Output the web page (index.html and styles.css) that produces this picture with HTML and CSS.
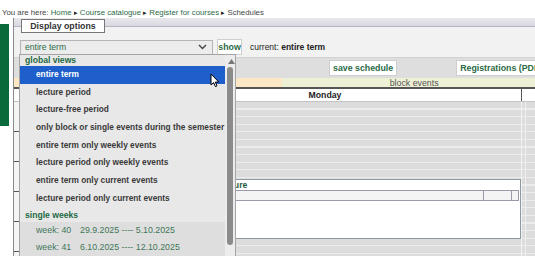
FILE: index.html
```html
<!DOCTYPE html>
<html lang="en">
<head>
  <meta charset="UTF-8">
  <title>Schedules</title>
  <link rel="stylesheet" href="styles.css">
</head>
<body>

  <div class="crumbs">
    You are here: <a href="#">Home</a> <span class="arr">&#9656;</span>
    <a href="#">Course catalogue</a> <span class="arr">&#9656;</span>
    <a href="#">Register for courses</a> <span class="arr">&#9656;</span>
    Schedules
  </div>

  <div class="page">
    <div class="brand"></div>

    <div class="panel">
      <div class="panel-top"></div>

      <div class="options">
        <div class="legend">Display options</div>
        <div class="opt-row">
          <div class="select">
            <span>entire term</span>
            <svg width="9" height="6" viewBox="0 0 9 6"><path d="M1 1 L4.5 4.5 L8 1" fill="none" stroke="#444" stroke-width="1.4"/></svg>
          </div>
          <button class="btn">show</button>
          <span class="current">current: <b>entire term</b></span>
        </div>
      </div>

      <div class="sched">
        <div class="toolbar">
          <button class="btn">save schedule</button>
          <button class="btn">Registrations (PDF)</button>
        </div>
        <div class="block-row">
          <div class="block-pad"></div>
          <div class="block-ev">block events</div>
        </div>
        <div class="days">
          <div class="time-col"></div>
          <div class="day">Monday</div>
          <div class="rest"></div>
        </div>
        <div class="grid">
          <div class="time-col hours"></div>
          <div class="day-col">
            <div class="event">
              <div class="ev-title">Lecture</div>
              <div class="ev-bar">
                <div class="ev-cell main"></div>
                <div class="ev-cell mid"></div>
                <div class="ev-cell end"></div>
              </div>
            </div>
          </div>
          <div class="rest"></div>
        </div>
      </div>
    </div>

    <!-- open select list -->
    <div class="dropdown">
      <div class="list">
        <div class="grp">global views</div>
        <div class="opt on">entire term</div>
        <div class="opt">lecture period</div>
        <div class="opt">lecture-free period</div>
        <div class="opt">only block or single events during the semester</div>
        <div class="opt">entire term only weekly events</div>
        <div class="opt">lecture period only weekly events</div>
        <div class="opt">entire term only current events</div>
        <div class="opt">lecture period only current events</div>
        <div class="grp wk-head">single weeks</div>
        <div class="opt week"><span class="wk">week: 40</span>29.9.2025 ---- 5.10.2025</div>
        <div class="opt week"><span class="wk">week: 41</span>6.10.2025 ---- 12.10.2025</div>
      </div>
      <div class="scroll">
        <svg class="up" width="7" height="5" viewBox="0 0 7 5"><path d="M0 5 L3.5 0 L7 5 Z" fill="#777"/></svg>
        <div class="thumb"></div>
      </div>
    </div>

    <svg class="cursor" width="10" height="15" viewBox="0 0 10 15">
      <path d="M1 1 L1 12 L3.6 9.6 L5.4 13.6 L7 12.9 L5.3 9 L8.8 9 Z" fill="#fff" stroke="#000" stroke-width="1"/>
    </svg>
  </div>

</body>
</html>
```

FILE: styles.css
```css
:root {
  --green: #2b6b46;
  --text: #333;
}
* { margin: 0; padding: 0; box-sizing: border-box; }
body {
  font-family: "Liberation Sans", Arial, sans-serif;
  color: var(--text);
  background: #fff;
  width: 535px; height: 256px; overflow: hidden;
}

.crumbs { height: 18px; padding: 7px 0 0 2px; font-size: 7.8px; line-height: 12px; white-space: nowrap; color: #444; }
.crumbs a { color: var(--green); text-decoration: none; }
.crumbs .arr { font-size: 7px; color: #222; }

.page { position: relative; display: flex; height: 238px; }
.brand { width: 9px; height: 102px; margin-top: 6px; background: #0b6a3a; flex: none; }
.panel { margin-left: 4px; border-left: 1px solid #8a8a8a; flex: 1; display: flex; flex-direction: column; }

.panel-top { height: 9px; background: linear-gradient(#e8e8ec, #d8d9e0); border-bottom: 1px solid #b4b7c3; }
.options { height: 31px; background: #f2f2f2; border-bottom: 1px solid #d2d2d2; padding-left: 6px; }
.legend {
  width: 84px; height: 14px; margin: -8px 0 0 1px; background: #fff; border: 1px solid #777;
  font-weight: bold; font-size: 8.8px; line-height: 12px; text-align: center; color: #333;
}
.opt-row { display: flex; align-items: center; margin-top: 6px; }
.select {
  width: 193px; height: 15px; background: #ececec; border: 1px solid #b4b4b4;
  display: flex; align-items: center; justify-content: space-between; padding: 0 5px 0 4px;
  font-size: 8.6px; color: var(--green);
}
.btn {
  background: #fff; border: 1px solid #cfcfcf; color: var(--green);
  font-family: inherit; font-weight: bold; font-size: 8.8px; padding: 0 3px; height: 16px;
}
.opt-row .btn { margin-left: 4px; width: 25px; padding: 0; }
.current { margin-left: 8px; font-size: 8.5px; color: #222; }

.sched { flex: 1; display: flex; flex-direction: column; }
.toolbar { height: 20px; background: #dedede; display: flex; align-items: center; padding-left: 315px; gap: 59px; white-space: nowrap; }
.toolbar .btn { height: 16px; padding: 0 3px; flex: none; }

.block-row { height: 11px; display: flex; border-bottom: 2px solid #555; font-size: 8.8px; line-height: 10px; }
.block-pad { width: 268px; background: #fce7c4; }
.block-ev { flex: 1; background: #eef0d6; color: #555; text-align: center; }

.days { height: 13px; display: flex; background: #fff; border-bottom: 1px solid #c4c4c4; }
.time-col { width: 115px; flex: none; }
.day { width: 393px; border-right: 1px solid #555; text-align: center; font-weight: bold; font-size: 8.7px; line-height: 12px; color: #222; }
.rest { flex: 1; }

.grid {
  flex: 1; display: flex;
  background: repeating-linear-gradient(#dcdcdc 0 6.5px, #ececec 6.5px 7.6px);
}
.hours { background: repeating-linear-gradient(#f4f4f4 0 29px, #555 29px 30px); }
.day-col { width: 393px; border-right: 1px solid #f2f2f2; padding: 77px 0 0 82px; }
.event { height: 60px; background: #fff; border: 1px solid #8d9aa0; padding: 1px 1px 0 0; }
.ev-title { font-weight: bold; font-size: 8.7px; line-height: 9px; color: #1f5a3c; padding-left: 4px; }
.ev-bar { display: flex; height: 11px; background: #f4f4f4; border: 1px solid #9a9aac; }
.ev-cell { border-right: 1px solid #9a9aac; }
.ev-cell.main { flex: 1; }
.ev-cell.mid { width: 28px; }
.ev-cell.end { width: 6px; border-right: none; }
.grid .rest { border-left: 1px solid #f0f0f0; margin-left: 3px; }

.dropdown {
  position: absolute; left: 19px; top: 36px; width: 217px; height: 210px;
  background: #e8e8e8; border: 1px solid #a4a4a4; display: flex; overflow: hidden;
}
.list { width: 205px; flex: none; font-size: 8.3px; }
.grp { height: 11px; line-height: 11px; padding-left: 5px; font-weight: bold; font-size: 8.6px; color: #236a44; }
.grp.wk-head { height: 14px; line-height: 14px; }
.opt { height: 17.7px; line-height: 17.7px; padding-left: 16px; font-weight: bold; color: #3a3a3a; white-space: nowrap; }
.opt.on { background: #1e5fcc; color: #fff; }
.opt.week { background: #dedede; font-weight: normal; font-size: 8.8px; color: #3f7658; }
.wk { display: inline-block; width: 44px; }

.scroll { flex: 1; position: relative; background: #ececec; }
.scroll .up { position: absolute; left: 3px; top: 4px; }
.thumb { position: absolute; left: 2px; top: 12px; width: 6px; height: 178px; background: #8b8b8b; border-radius: 3px; }

.cursor { position: absolute; left: 210px; top: 55px; }
```
